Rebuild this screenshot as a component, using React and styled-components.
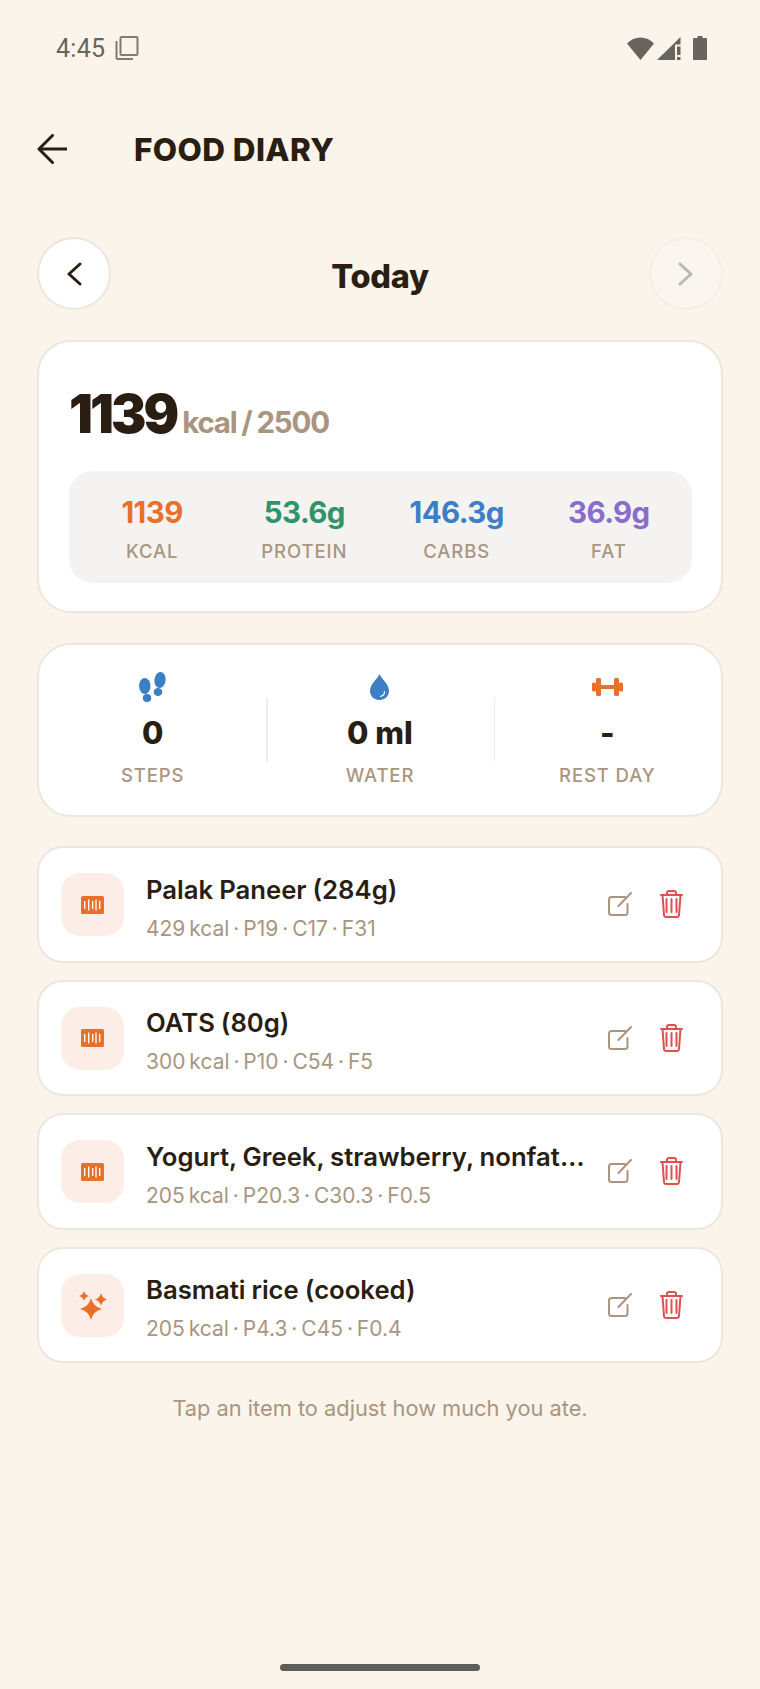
import React from "react";
import styled, { createGlobalStyle } from "styled-components";

const GlobalStyle = createGlobalStyle`
  html, body { margin: 0; padding: 0; background: #fbf4ea; }
  * { box-sizing: border-box; }
`;

const FONT = `Inter, "Noto Sans", "Liberation Sans", sans-serif`;
const INK = "#2a1e12";
const MUTED = "#a99580";
const ORANGE = "#e8702a";
const BLUE = "#3d7fc4";

const foods = [
  { name: "Palak Paneer (284g)", info: "429 kcal · P19 · C17 · F31", icon: "barcode" },
  { name: "OATS (80g)", info: "300 kcal · P10 · C54 · F5", icon: "barcode" },
  { name: "Yogurt, Greek, strawberry, nonfat…", info: "205 kcal · P20.3 · C30.3 · F0.5", icon: "barcode" },
  { name: "Basmati rice (cooked)", info: "205 kcal · P4.3 · C45 · F0.4", icon: "spark" },
];

const macros = [
  { value: "1139", label: "KCAL", color: ORANGE },
  { value: "53.6g", label: "PROTEIN", color: "#2f9468" },
  { value: "146.3g", label: "CARBS", color: BLUE },
  { value: "36.9g", label: "FAT", color: "#8a6cca" },
];

const Page = styled.div`
  width: 760px;
  height: 1689px;
  background: #fbf4ea;
  font-family: ${FONT};
  color: ${INK};
  overflow: hidden;
  position: relative;
`;

const StatusBar = styled.div`
  height: 96px;
  padding: 0 53px 0 56px;
  display: flex;
  align-items: center;
  justify-content: space-between;
  color: #67645f;
`;

const StatusLeft = styled.div`
  display: flex;
  align-items: center;
  gap: 10px;
  font-family: Roboto, sans-serif;
  font-size: 25px;
  letter-spacing: 0.3px;
`;

const StatusRight = styled.div`
  display: flex;
  align-items: center;
  gap: 3px;
`;

const Header = styled.div`
  height: 106px;
  padding-left: 37px;
  display: flex;
  align-items: center;
`;

const Title = styled.h1`
  margin: 0 0 0 67px;
  font-size: 31.5px;
  font-weight: 800;
  letter-spacing: 0.4px;
`;

const DateNav = styled.div`
  margin-top: 35px;
  padding: 0 37px;
  display: flex;
  align-items: center;
  justify-content: space-between;
`;

const RoundButton = styled.div`
  width: 74px;
  height: 73px;
  border-radius: 50%;
  display: flex;
  align-items: center;
  justify-content: center;
  background: ${(p) => (p.$off ? "#faf5ee" : "#fff")};
  border: 2px solid ${(p) => (p.$off ? "#f3eee6" : "#ece7de")};
`;

const DateLabel = styled.div`
  font-size: 32.5px;
  font-weight: 800;
  letter-spacing: -0.3px;
  margin-top: 6px;
`;

const Card = styled.div`
  background: #fff;
  border: 2px solid #ece7de;
  border-radius: 34px;
`;

const Stack = styled.div`
  margin-top: 30px;
  padding: 0 37px;
  display: flex;
  flex-direction: column;
`;

const SummaryCard = styled(Card)`
  height: 273px;
  padding: 40px 29px 0 30px;
`;

const Totals = styled.div`
  display: flex;
  align-items: baseline;
  gap: 6px;
  height: 72px;
`;

const TotalValue = styled.span`
  font-size: 53px;
  font-weight: 900;
  letter-spacing: -3px;
`;

const TotalGoal = styled.span`
  font-size: 29.5px;
  font-weight: 700;
  letter-spacing: -1.2px;
  word-spacing: -1px;
  color: ${MUTED};
`;

const MacroBox = styled.div`
  margin-top: 17px;
  height: 112px;
  border-radius: 24px;
  background: #f5f3f1;
  display: grid;
  grid-template-columns: repeat(4, 1fr);
  padding: 2px 7px 0;
  align-items: center;
`;

const Cell = styled.div`
  display: flex;
  flex-direction: column;
  align-items: center;
`;

const MacroValue = styled.div`
  font-size: 29.5px;
  font-weight: 700;
  letter-spacing: -0.6px;
  line-height: 36px;
  color: ${(p) => p.$color};
`;

const Label = styled.div`
  font-size: 18.5px;
  font-weight: 500;
  letter-spacing: 0.9px;
  line-height: 24px;
  color: ${MUTED};
  margin-top: 9px;
`;

const ActivityCard = styled(Card)`
  margin-top: 30px;
  height: 174px;
  padding-top: 22px;
  display: grid;
  grid-template-columns: repeat(3, 1fr);
  align-items: start;
`;

const ActivityCell = styled(Cell)`
  position: relative;
  & + &::before {
    content: "";
    position: absolute;
    left: 0;
    top: 31px;
    height: 64px;
    width: 1.5px;
    background: #f0eeeb;
  }
`;

const IconSlot = styled.div`
  height: 38px;
  padding-top: 2px;
  display: flex;
  align-items: center;
  justify-content: center;
`;

const ActivityValue = styled.div`
  font-size: 31px;
  font-weight: 800;
  line-height: 38px;
  margin-top: 9px;
`;

const ActivityLabel = styled(Label)`
  margin-top: 11px;
`;

const FoodList = styled.div`
  margin-top: 29px;
  display: flex;
  flex-direction: column;
  gap: 17px;
`;

const FoodRow = styled(Card)`
  height: 116.5px;
  border-radius: 26px;
  padding: 0 38px 0 22px;
  display: flex;
  align-items: center;
`;

const FoodIcon = styled.div`
  width: 63px;
  height: 63px;
  flex: none;
  margin-top: 1px;
  border-radius: 19px;
  background: #fceee7;
  display: flex;
  align-items: center;
  justify-content: center;
`;

const FoodText = styled.div`
  flex: 1;
  min-width: 0;
  margin-left: 22px;
  padding-top: 7px;
`;

const FoodName = styled.div`
  font-size: 25.7px;
  font-weight: 600;
  line-height: 34px;
  word-spacing: -0.5px;
  white-space: nowrap;
`;

const FoodInfo = styled.div`
  font-size: 21px;
  color: ${MUTED};
  line-height: 28px;
  margin-top: 8px;
  word-spacing: -2px;
`;

const Actions = styled.div`
  display: flex;
  align-items: center;
  gap: 28px;
  flex: none;
`;

const Hint = styled.div`
  margin-top: 31px;
  text-align: center;
  font-size: 21.8px;
  line-height: 28px;
  color: ${MUTED};
`;

const HomeBar = styled.div`
  position: absolute;
  left: 280px;
  bottom: 18px;
  width: 200px;
  height: 7px;
  border-radius: 4px;
  background: #5f5d5a;
`;

// four pointed star with soft sides, used for the AI food icon
const star = (cx, cy, r) => {
  const k = r * 0.2;
  return `M${cx} ${cy - r}Q${cx + k} ${cy - k} ${cx + r} ${cy}Q${cx + k} ${cy + k} ${cx} ${cy + r}Q${cx - k} ${cy + k} ${cx - r} ${cy}Q${cx - k} ${cy - k} ${cx} ${cy - r}Z`;
};

const Wifi = () => (
  <svg width="27" height="23" viewBox="0 0 27 23"><path d="M0 6.500C7 -1.500 20 -1.500 27 6.500L13.500 23Z" fill="#67645f" /></svg>
);
const Signal = () => (
  <svg width="24" height="23" viewBox="0 0 24 23">
    <path d="M0 23L23.500 0V7.500H18V23Z" fill="#67645f" />
    <rect x="20" y="9.500" width="3.500" height="8.500" fill="#67645f" />
    <rect x="20" y="20" width="3.500" height="3" fill="#67645f" />
  </svg>
);
const Battery = () => (
  <svg width="14" height="24" viewBox="0 0 14 24" style={{ marginLeft: 9 }}><path d="M4.500 0H9.500V2H13Q14 2 14 3V23Q14 24 13 24H1Q0 24 0 23V3Q0 2 1 2H4.500Z" fill="#67645f" /></svg>
);
const CopyIcon = () => (
  <svg width="24" height="24" viewBox="0 0 24 24" fill="none" stroke="#7f7c76" strokeWidth="2">
    <rect x="5.500" y="1" width="17" height="18" rx="1" />
    <path d="M1.500 5V21.500Q1.500 23 3 23H18" />
  </svg>
);
const BackArrow = () => (
  <svg width="30" height="30" viewBox="0 0 30 30" fill="none" stroke={INK} strokeWidth="3" strokeLinejoin="round">
    <path d="M30 15H2" />
    <path d="M15.500 1.500L2 15L15.500 28.500" strokeLinecap="round" />
  </svg>
);
const Chevron = ({ right, color }) => (
  <svg width="15" height="24" viewBox="0 0 15 24" fill="none" stroke={color} strokeWidth="3" strokeLinecap="round" strokeLinejoin="round">
    <path d={right ? "M2 2L13 12L2 22" : "M13 2L2 12L13 22"} />
  </svg>
);
const Steps = () => (
  <svg width="27" height="30" viewBox="0 0 27 30" fill={BLUE}>
    <ellipse cx="5.800" cy="14" rx="5.700" ry="8" />
    <ellipse cx="8" cy="26" rx="4.200" ry="4" />
    <ellipse cx="21" cy="8" rx="5.600" ry="8" transform="rotate(6 21 8)" />
    <ellipse cx="19" cy="20" rx="4.300" ry="4" />
  </svg>
);
const Drop = () => (
  <svg width="19" height="26" viewBox="0 0 19 26">
    <path d="M9.500 0C11.500 5 19 10 19 17C19 22 15 26 9.500 26C4 26 0 22 0 17C0 10 7.500 5 9.500 0Z" fill={BLUE} />
    <path d="M14.500 17.500C14.500 20.500 13 22 10.500 22.300" fill="none" stroke="#fff" strokeWidth="1.200" strokeLinecap="round" />
  </svg>
);
const Dumbbell = () => (
  <svg width="31" height="18" viewBox="0 0 31 18" fill={ORANGE}>
    <rect x="0" y="4.500" width="4" height="9" rx="1.500" />
    <rect x="4" y="0" width="5" height="18" rx="1.500" />
    <rect x="9" y="7" width="13" height="4" />
    <rect x="22" y="0" width="5" height="18" rx="1.500" />
    <rect x="27" y="4.500" width="4" height="9" rx="1.500" />
  </svg>
);
const Barcode = () => (
  <svg width="23" height="18" viewBox="0 0 23 18">
    <rect width="23" height="18" rx="1.500" fill={ORANGE} />
    <path d="M3.700 5V13M7.700 3.500V14.500M11.700 5V13M15 3.500V14.500M18.700 5V13" stroke="#fff" strokeWidth="1.300" />
  </svg>
);
const Sparkles = () => (
  <svg width="28" height="29" viewBox="0 0 28 29" fill={ORANGE}>
    <path d={star(12, 18, 11)} />
    <path d={star(22, 8.500, 6.300)} />
    <path d={star(5, 5, 5)} />
  </svg>
);
const Edit = () => (
  <svg width="24" height="24" viewBox="0 0 24 24" fill="none" stroke={MUTED} strokeWidth="2" strokeLinecap="round" strokeLinejoin="round">
    <path d="M17 5H3.500Q1 5 1 7.500V20.500Q1 23 3.500 23H17Q19.500 23 19.500 20.500V12" />
    <path d="M10.500 14L23 1" />
  </svg>
);
const Trash = () => (
  <svg width="23" height="28" viewBox="0 0 23 28" fill="none" stroke="#e0504c" strokeWidth="2" strokeLinecap="round" strokeLinejoin="round">
    <path d="M1 5H22M7 5V3Q7 1 9 1H14Q16 1 16 3V5" />
    <path d="M2.500 5L4 25Q4.200 27 6.200 27H16.800Q18.800 27 19 25L20.500 5" />
    <path d="M6.500 9V22M11.500 9V22M16.500 9V22" />
  </svg>
);

export default function App() {
  return (
    <Page>
      <GlobalStyle />
      <StatusBar>
        <StatusLeft>4:45 <CopyIcon /></StatusLeft>
        <StatusRight><Wifi /><Signal /><Battery /></StatusRight>
      </StatusBar>
      <Header>
        <BackArrow />
        <Title>FOOD DIARY</Title>
      </Header>
      <DateNav>
        <RoundButton><Chevron color={INK} /></RoundButton>
        <DateLabel>Today</DateLabel>
        <RoundButton $off><Chevron right color="#bdb8af" /></RoundButton>
      </DateNav>
      <Stack>
        <SummaryCard>
          <Totals>
            <TotalValue>1139</TotalValue>
            <TotalGoal>kcal / 2500</TotalGoal>
          </Totals>
          <MacroBox>
            {macros.map((m) => (
              <Cell key={m.label}>
                <MacroValue $color={m.color}>{m.value}</MacroValue>
                <Label>{m.label}</Label>
              </Cell>
            ))}
          </MacroBox>
        </SummaryCard>
        <ActivityCard>
          <ActivityCell>
            <IconSlot><Steps /></IconSlot>
            <ActivityValue>0</ActivityValue>
            <ActivityLabel>STEPS</ActivityLabel>
          </ActivityCell>
          <ActivityCell>
            <IconSlot><Drop /></IconSlot>
            <ActivityValue>0 ml</ActivityValue>
            <ActivityLabel>WATER</ActivityLabel>
          </ActivityCell>
          <ActivityCell>
            <IconSlot><Dumbbell /></IconSlot>
            <ActivityValue>-</ActivityValue>
            <ActivityLabel>REST DAY</ActivityLabel>
          </ActivityCell>
        </ActivityCard>
        <FoodList>
          {foods.map((f) => (
            <FoodRow key={f.name}>
              <FoodIcon>{f.icon === "spark" ? <Sparkles /> : <Barcode />}</FoodIcon>
              <FoodText>
                <FoodName>{f.name}</FoodName>
                <FoodInfo>{f.info}</FoodInfo>
              </FoodText>
              <Actions><Edit /><Trash /></Actions>
            </FoodRow>
          ))}
        </FoodList>
        <Hint>Tap an item to adjust how much you ate.</Hint>
      </Stack>
      <HomeBar />
    </Page>
  );
}
